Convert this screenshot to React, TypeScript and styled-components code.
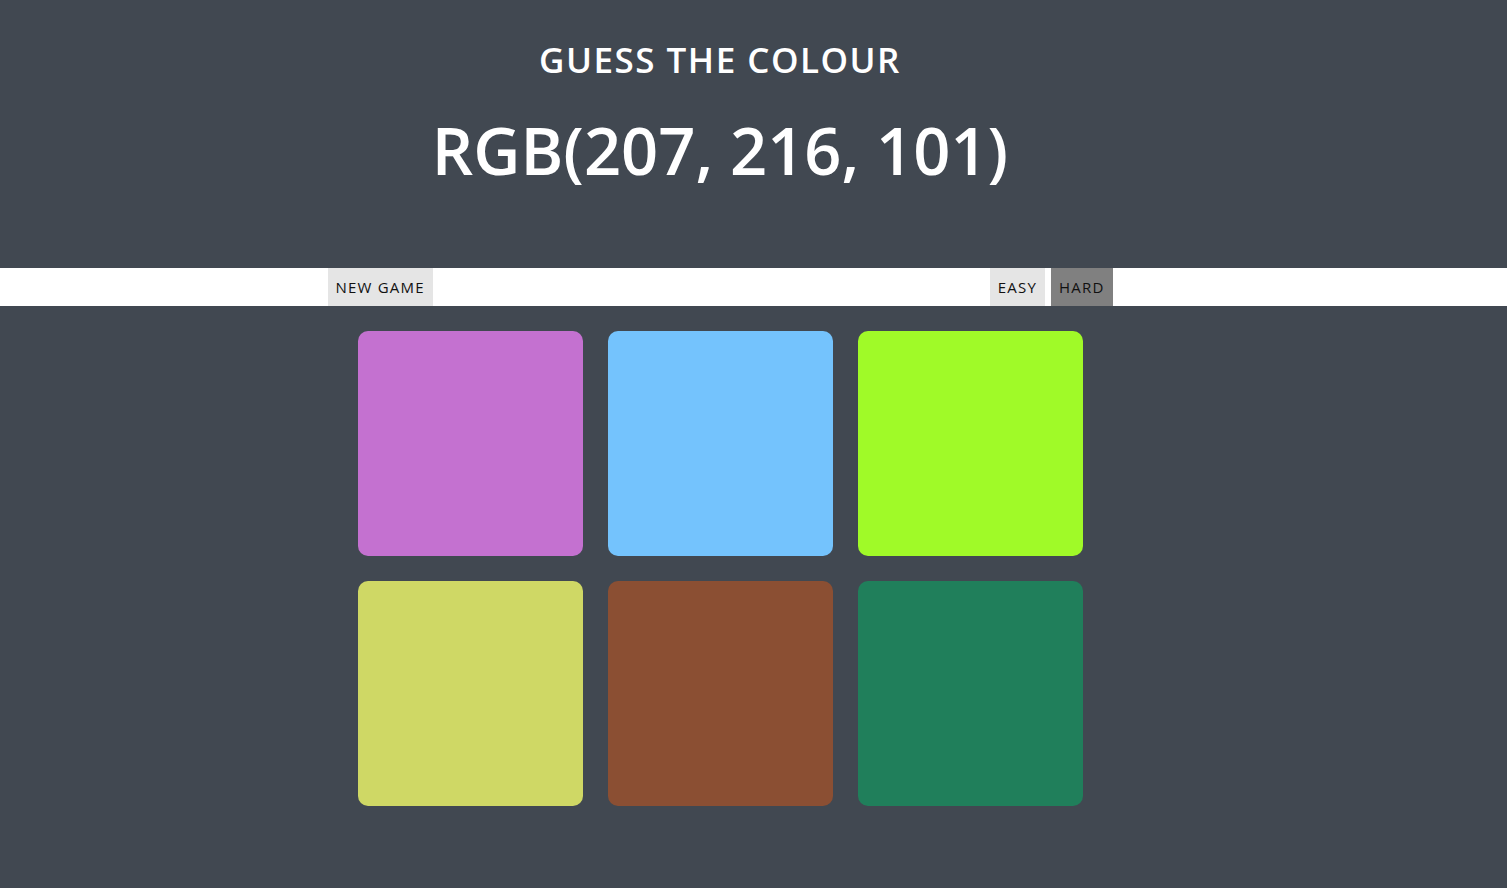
import React from "react";
import styled, { createGlobalStyle } from "styled-components";

const Global = createGlobalStyle`
  html, body { margin: 0; padding: 0; }
  body {
    background: #414851;
    font-family: "Open Sans", "Noto Sans", sans-serif;
    min-height: 888px;
  }
`;

const Page = styled.div`
  min-height: 888px;
  background: #414851;
`;

const Header = styled.header`
  height: 268px;
  box-sizing: border-box;
  padding-top: 36px;
  padding-right: 67px;
  display: flex;
  flex-direction: column;
  align-items: center;
  color: #ffffff;
`;

const Title = styled.h1`
  margin: 0;
  font-size: 35px;
  font-weight: 600;
  letter-spacing: 1.5px;
  line-height: 48px;
`;

const Code = styled.h2`
  margin: 18px 0 0;
  font-size: 65px;
  font-weight: 600;
  letter-spacing: 0;
  line-height: 96px;
`;

const Bar = styled.nav`
  background: #ffffff;
  height: 38px;
  padding-right: 67px;
  display: flex;
  justify-content: center;
`;

const BarInner = styled.div`
  width: 785px;
  display: flex;
  align-items: stretch;
  gap: 6px;
`;

const Spacer = styled.div`
  flex: 1;
`;

const Button = styled.button<{ $active?: boolean }>`
  border: none;
  margin: 0;
  padding: 0 8px;
  background: ${(p) => (p.$active ? "#808080" : "#e5e5e5")};
  color: #111111;
  font-family: "Open Sans", "Noto Sans", sans-serif;
  font-size: 15px;
  letter-spacing: 1.2px;
  line-height: 36px;
  cursor: pointer;
`;

const Grid = styled.main`
  padding: 25px 67px 0 0;
  display: grid;
  grid-template-columns: repeat(3, 225px);
  gap: 25px;
  justify-content: center;
`;

const Square = styled.div<{ $color: string }>`
  width: 225px;
  height: 225px;
  border-radius: 10px;
  background: ${(p) => p.$color};
`;

const colors = [
  "rgb(196, 113, 208)",
  "rgb(116, 195, 253)",
  "rgb(160, 250, 40)",
  "rgb(207, 216, 101)",
  "rgb(139, 79, 51)",
  "rgb(32, 127, 91)",
];

export default function App() {
  return (
    <Page>
      <Global />
      <Header>
        <Title>GUESS THE COLOUR</Title>
        <Code>RGB(207, 216, 101)</Code>
      </Header>
      <Bar>
        <BarInner>
          <Button>NEW GAME</Button>
          <Spacer />
          <Button>EASY</Button>
          <Button $active>HARD</Button>
        </BarInner>
      </Bar>
      <Grid>
        {colors.map((c) => (
          <Square key={c} $color={c} />
        ))}
      </Grid>
    </Page>
  );
}
